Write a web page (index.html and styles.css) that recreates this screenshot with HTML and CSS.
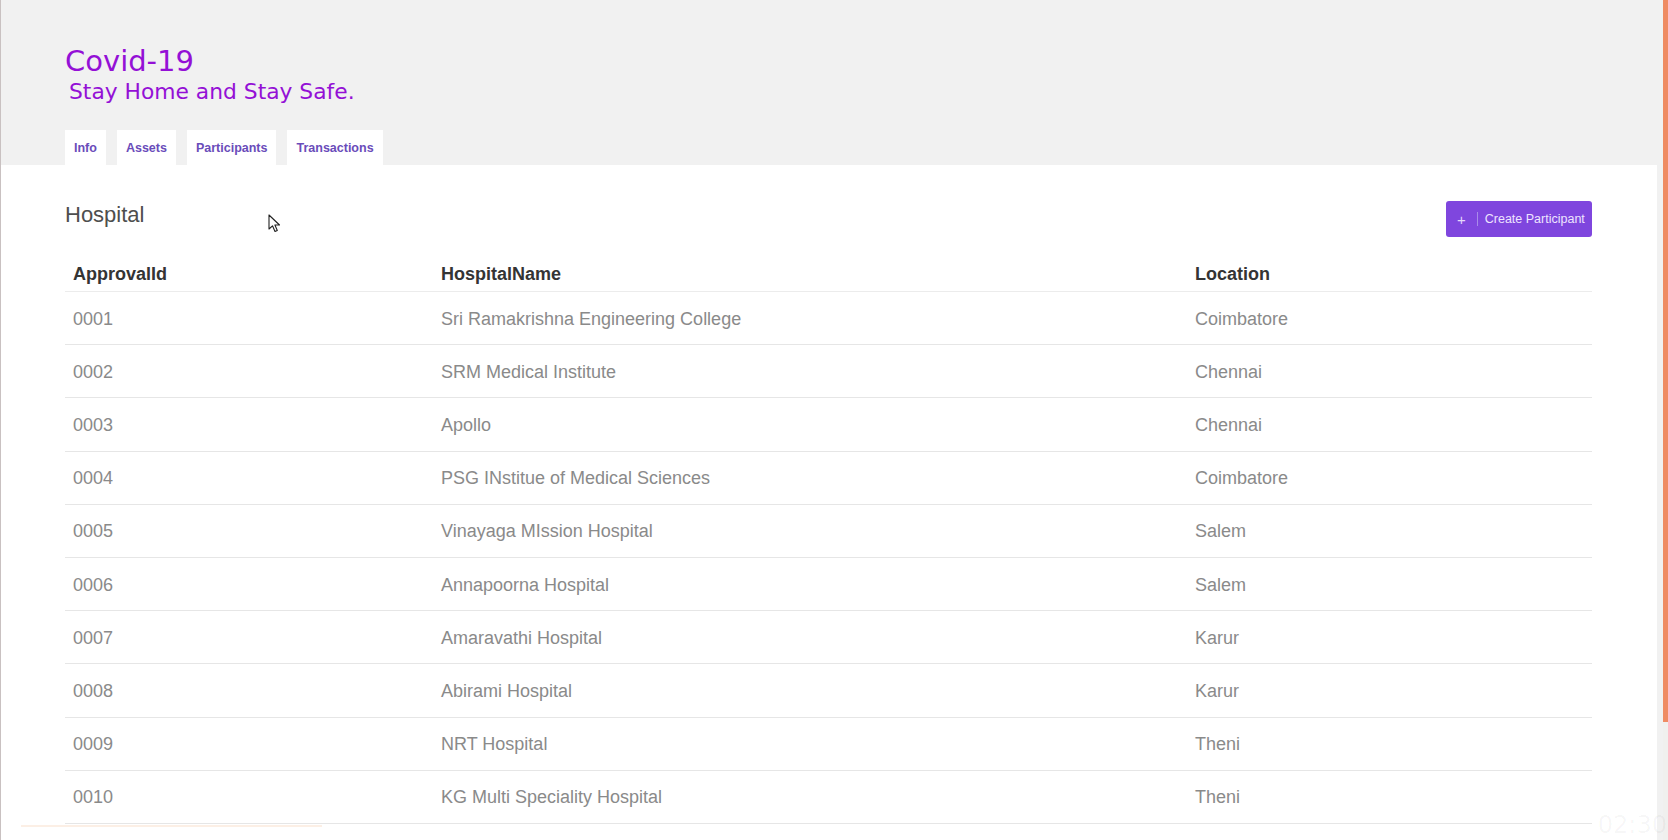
FILE: index.html
```html
<!DOCTYPE html>
<html lang="en">
<head>
<meta charset="utf-8">
<title>Covid-19</title>
<link rel="stylesheet" href="styles.css">
</head>
<body>
<div class="app">
  <div class="page">
    <header class="hero">
      <h1 class="title">Covid-19</h1>
      <p class="subtitle">Stay Home and Stay Safe.</p>
      <nav class="tabs">
        <a class="tab">Info</a>
        <a class="tab">Assets</a>
        <a class="tab">Participants</a>
        <a class="tab">Transactions</a>
      </nav>
    </header>
    <main class="content">
      <div class="toolbar">
        <h2 class="section-title">Hospital</h2>
        <button class="btn-create"><span class="plus">+</span><span class="sep"></span><span class="btn-label">Create Participant</span></button>
      </div>
      <table class="grid">
        <colgroup><col class="c1"><col class="c2"><col class="c3"></colgroup>
        <thead>
          <tr><th>ApprovalId</th><th>HospitalName</th><th>Location</th></tr>
        </thead>
        <tbody>
          <tr><td>0001</td><td>Sri Ramakrishna Engineering College</td><td>Coimbatore</td></tr>
          <tr><td>0002</td><td>SRM Medical Institute</td><td>Chennai</td></tr>
          <tr><td>0003</td><td>Apollo</td><td>Chennai</td></tr>
          <tr><td>0004</td><td>PSG INstitue of Medical Sciences</td><td>Coimbatore</td></tr>
          <tr><td>0005</td><td>Vinayaga MIssion Hospital</td><td>Salem</td></tr>
          <tr><td>0006</td><td>Annapoorna Hospital</td><td>Salem</td></tr>
          <tr><td>0007</td><td>Amaravathi Hospital</td><td>Karur</td></tr>
          <tr><td>0008</td><td>Abirami Hospital</td><td>Karur</td></tr>
          <tr><td>0009</td><td>NRT Hospital</td><td>Theni</td></tr>
          <tr><td>0010</td><td>KG Multi Speciality Hospital</td><td>Theni</td></tr>
        </tbody>
      </table>
    </main>
  </div>
  <div class="scrollbar"><div class="thumb"></div></div>
  <svg class="cursor" width="13" height="19" viewBox="0 0 13 19"><path d="M1 1 L1 15 L4.5 11.8 L7 17.5 L9.3 16.5 L6.9 11 L11.5 11 Z" fill="#fff" stroke="#222" stroke-width="1.1" stroke-linejoin="round"/></svg>
  <div class="progress"></div>
  <div class="timestamp">02:30</div>
</div>
</body>
</html>
```
FILE: styles.css
```css
* { box-sizing: border-box; }
html, body { margin: 0; padding: 0; }
body {
  width: 1668px;
  height: 840px;
  overflow: hidden;
  background: #f1f1f0;
  font-family: "Liberation Sans", Arial, sans-serif;
}
.app {
  position: relative;
  display: flex;
  width: 1668px;
  height: 840px;
  overflow: hidden;
}
.page {
  flex: 1;
  display: flex;
  flex-direction: column;
  border-left: 1px solid #c9c1c1;
  background: #f1f1f1;
  padding-right: 6px;
}
.hero {
  height: 165px;
  flex: none;
  padding: 44px 0 0 64px;
  display: flex;
  flex-direction: column;
}
.title {
  margin: 0;
  font-family: "DejaVu Sans", Verdana, sans-serif;
  font-weight: 400;
  font-size: 29px;
  line-height: 34px;
  color: #9410d6;
}
.subtitle {
  margin: 1px 0 0 0;
  padding-left: 4px;
  font-family: "DejaVu Sans", Verdana, sans-serif;
  font-size: 21.8px;
  line-height: 26px;
  color: #9410d6;
}
.tabs {
  display: flex;
  gap: 11px;
  margin-top: 25px;
}
.tab {
  display: block;
  background: #ffffff;
  padding: 0 9px;
  height: 36px;
  line-height: 37px;
  font-size: 12.5px;
  font-weight: 700;
  color: #6a4cba;
}
.content {
  flex: 1;
  background: #ffffff;
  padding: 36px 65px 0 64px;
}
.toolbar {
  display: flex;
  justify-content: space-between;
  align-items: flex-start;
  height: 36px;
}
.section-title {
  margin: 2px 0 0 0;
  font-size: 22px;
  font-weight: 400;
  line-height: 24px;
  color: #4e4e4e;
}
.btn-create {
  display: flex;
  align-items: center;
  height: 36px;
  width: 146px;
  padding: 0 0 0 11px;
  border: none;
  border-radius: 3px;
  background: #7f46de;
  font-family: "Liberation Sans", Arial, sans-serif;
  color: #eee4ff;
  font-size: 12.5px;
}
.plus {
  font-size: 15px;
  line-height: 1;
  color: #e4d8fb;
}
.sep {
  width: 1px;
  height: 14px;
  background: #a98be9;
  margin: 0 7px 0 11px;
}
.btn-label {
  white-space: nowrap;
}
.grid {
  width: 100%;
  margin-top: 18px;
  border-collapse: separate;
  border-spacing: 0;
  font-size: 18px;
}
.c1 { width: 368px; }
.c2 { width: 754px; }
.grid th {
  text-align: left;
  font-weight: 700;
  color: #343434;
  padding: 9px 8px 7px 8px;
  line-height: 20px;
  border-bottom: 1px solid #ececec;
}
.grid td {
  color: #8a8a8a;
  padding: 15.7px 8px 14.5px 8px;
  line-height: 22px;
  border-bottom: 1px solid #e6e6e6;
}
.scrollbar {
  width: 5px;
  height: 840px;
  background: #f0f0ee;
}
.thumb {
  height: 722px;
  background: #ef8b63;
}
.cursor {
  position: absolute;
  left: 268px;
  top: 214px;
}
.progress {
  position: absolute;
  left: 21px;
  top: 825px;
  width: 301px;
  height: 2px;
  background: #fcefe5;
}
.timestamp {
  position: absolute;
  right: 1px;
  top: 812px;
  font-family: "DejaVu Sans", sans-serif;
  font-size: 24px;
  line-height: 26px;
  color: rgba(0, 0, 0, 0.04);
}
```
